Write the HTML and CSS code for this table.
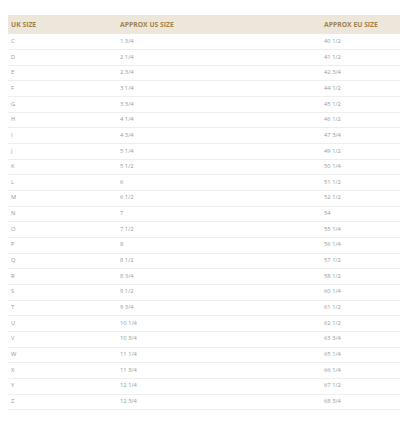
FILE: index.html
```html
<!DOCTYPE html>
<html>
<head>
<meta charset="utf-8">
<link rel="stylesheet" href="styles.css">
</head>
<body>
<table class="sizes">
  <colgroup><col class="c1"><col class="c2"><col class="c3"></colgroup>
  <thead>
    <tr><th>UK SIZE</th><th>APPROX US SIZE</th><th>APPROX EU SIZE</th></tr>
  </thead>
  <tbody>
    <tr><td>C</td><td>1 3/4</td><td>40 1/2</td></tr>
    <tr><td>D</td><td>2 1/4</td><td>41 1/2</td></tr>
    <tr><td>E</td><td>2 3/4</td><td>42 3/4</td></tr>
    <tr><td>F</td><td>3 1/4</td><td>44 1/2</td></tr>
    <tr><td>G</td><td>3 3/4</td><td>45 1/2</td></tr>
    <tr><td>H</td><td>4 1/4</td><td>46 1/2</td></tr>
    <tr><td>I</td><td>4 3/4</td><td>47 3/4</td></tr>
    <tr><td>J</td><td>5 1/4</td><td>49 1/2</td></tr>
    <tr><td>K</td><td>5 1/2</td><td>50 1/4</td></tr>
    <tr><td>L</td><td>6</td><td>51 1/2</td></tr>
    <tr><td>M</td><td>6 1/2</td><td>52 1/2</td></tr>
    <tr><td>N</td><td>7</td><td>54</td></tr>
    <tr><td>O</td><td>7 1/2</td><td>55 1/4</td></tr>
    <tr><td>P</td><td>8</td><td>56 1/4</td></tr>
    <tr><td>Q</td><td>8 1/2</td><td>57 1/2</td></tr>
    <tr><td>R</td><td>8 3/4</td><td>58 1/2</td></tr>
    <tr><td>S</td><td>9 1/2</td><td>60 1/4</td></tr>
    <tr><td>T</td><td>9 3/4</td><td>61 1/2</td></tr>
    <tr><td>U</td><td>10 1/4</td><td>62 1/2</td></tr>
    <tr><td>V</td><td>10 3/4</td><td>63 3/4</td></tr>
    <tr><td>W</td><td>11 1/4</td><td>65 1/4</td></tr>
    <tr><td>X</td><td>11 3/4</td><td>66 1/4</td></tr>
    <tr><td>Y</td><td>12 1/4</td><td>67 1/2</td></tr>
    <tr><td>Z</td><td>12 3/4</td><td>68 3/4</td></tr>
  </tbody>
</table>
</body>
</html>
```
FILE: styles.css
```css
html, body {
  margin: 0;
  background: #ffffff;
}
body {
  padding: 15px 0 0 8px;
  font-family: "Open Sans", "Liberation Sans", sans-serif;
}
.sizes {
  width: 392px;
  border-collapse: collapse;
  table-layout: fixed;
}
.c1 { width: 109px; }
.c2 { width: 204px; }
.c3 { width: 79px; }
.sizes th {
  height: 19px;
  padding: 0 0 0 3px;
  background: #ede6da;
  color: #9f834e;
  font-size: 6.8px;
  font-weight: 700;
  text-align: left;
  vertical-align: middle;
}
.sizes td {
  height: 15.67px;
  padding: 0 0 0 3px;
  border-bottom: 1px solid #eeeeee;
  color: #999999;
  font-size: 5.8px;
  line-height: 1;
  vertical-align: middle;
  box-sizing: border-box;
}
```
